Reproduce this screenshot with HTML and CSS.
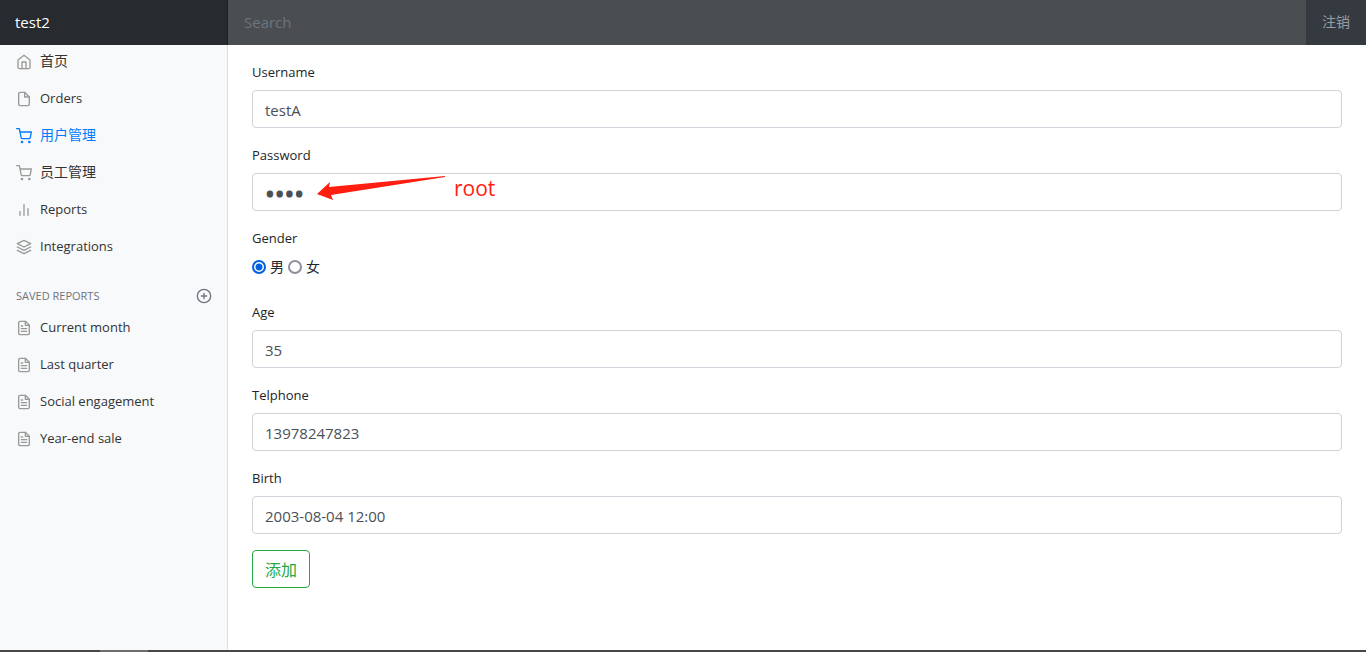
FILE: index.html
```
<!DOCTYPE html>
<html lang="zh-CN">
<head>
  <meta charset="UTF-8">
  <meta name="viewport" content="width=device-width, initial-scale=1.0">
  <title>用户管理</title>
  <link rel="stylesheet" href="styles.css">
</head>
<body>
  <svg class="sprite" aria-hidden="true">
    <symbol id="home" viewBox="0 0 24 24"><path d="M3 9l9-7 9 7v11a2 2 0 0 1-2 2H5a2 2 0 0 1-2-2z"/><path d="M9 22V12h6v10"/></symbol>
    <symbol id="file" viewBox="0 0 24 24"><path d="M13 2H6a2 2 0 0 0-2 2v16a2 2 0 0 0 2 2h12a2 2 0 0 0 2-2V9z"/><path d="M13 2v7h7"/></symbol>
    <symbol id="cart" viewBox="0 0 24 24"><circle cx="9" cy="21" r="1"/><circle cx="20" cy="21" r="1"/><path d="M1 1h4l2.68 13.39a2 2 0 0 0 2 1.61h9.72a2 2 0 0 0 2-1.61L23 6H6"/></symbol>
    <symbol id="bars" viewBox="0 0 24 24"><path d="M18 20V10M12 20V4M6 20v-6"/></symbol>
    <symbol id="layers" viewBox="0 0 24 24"><path d="M12 2L2 7l10 5 10-5-10-5z"/><path d="M2 17l10 5 10-5"/><path d="M2 12l10 5 10-5"/></symbol>
    <symbol id="text" viewBox="0 0 24 24"><path d="M14 2H6a2 2 0 0 0-2 2v16a2 2 0 0 0 2 2h12a2 2 0 0 0 2-2V8z"/><path d="M14 2v6h6M16 13H8M16 17H8M10 9H8"/></symbol>
    <symbol id="plus" viewBox="0 0 24 24"><circle cx="12" cy="12" r="10"/><path d="M12 8v8M8 12h8"/></symbol>
  </svg>

  <header class="navbar">
    <a class="brand" href="#">test2</a>
    <input class="search" type="text" placeholder="Search" aria-label="Search">
    <a class="logout" href="#">注销</a>
  </header>

  <div class="layout">
    <nav class="sidebar">
      <ul class="nav">
        <li><a class="nav-link zh" href="#"><svg class="icon"><use href="#home"/></svg><span>首页</span></a></li>
        <li><a class="nav-link" href="#"><svg class="icon"><use href="#file"/></svg><span>Orders</span></a></li>
        <li><a class="nav-link zh active" href="#"><svg class="icon"><use href="#cart"/></svg><span>用户管理</span></a></li>
        <li><a class="nav-link zh" href="#"><svg class="icon"><use href="#cart"/></svg><span>员工管理</span></a></li>
        <li><a class="nav-link" href="#"><svg class="icon"><use href="#bars"/></svg><span>Reports</span></a></li>
        <li><a class="nav-link" href="#"><svg class="icon"><use href="#layers"/></svg><span>Integrations</span></a></li>
      </ul>

      <h6 class="sidebar-heading">
        <span>Saved reports</span>
        <a href="#" aria-label="Add report"><svg class="icon"><use href="#plus"/></svg></a>
      </h6>

      <ul class="nav-saved">
        <li><a class="nav-link" href="#"><svg class="icon"><use href="#text"/></svg><span>Current month</span></a></li>
        <li><a class="nav-link" href="#"><svg class="icon"><use href="#text"/></svg><span>Last quarter</span></a></li>
        <li><a class="nav-link" href="#"><svg class="icon"><use href="#text"/></svg><span>Social engagement</span></a></li>
        <li><a class="nav-link" href="#"><svg class="icon"><use href="#text"/></svg><span>Year-end sale</span></a></li>
      </ul>
    </nav>

    <main class="content">
      <form>
        <div class="form-group">
          <label for="username">Username</label>
          <input class="form-control" id="username" type="text" value="testA">
        </div>
        <div class="form-group password">
          <label for="password">Password</label>
          <input class="form-control" id="password" type="password" value="root">
          <div class="note">
            <svg class="arrow" viewBox="0 0 130 26"><path d="M1 19L14 7l-1 5L129 1v1L15 20l2 5z"/></svg>
            <span>root</span>
          </div>
        </div>
        <div class="form-group" role="radiogroup" aria-labelledby="gender-label">
          <span class="label" id="gender-label">Gender</span>
          <div class="radios">
            <input type="radio" name="gender" id="male" checked>
            <label for="male">男</label>
            <input type="radio" name="gender" id="female">
            <label for="female">女</label>
          </div>
        </div>
        <div class="form-group">
          <label for="age">Age</label>
          <input class="form-control" id="age" type="text" value="35">
        </div>
        <div class="form-group">
          <label for="telphone">Telphone</label>
          <input class="form-control" id="telphone" type="text" value="13978247823">
        </div>
        <div class="form-group">
          <label for="birth">Birth</label>
          <input class="form-control" id="birth" type="text" value="2003-08-04 12:00">
        </div>
        <button class="btn" type="button">添加</button>
      </form>
    </main>
  </div>

  <footer class="taskbar"><span></span></footer>
</body>
</html>
```
FILE: styles.css
```
* {
  box-sizing: border-box;
}

body {
  margin: 0;
  min-height: 100vh;
  display: flex;
  flex-direction: column;
  font-family: "Open Sans", "Noto Sans CJK SC", sans-serif;
  font-size: 13px;
  line-height: 21px;
  color: #212529;
  background: #fff;
}

a {
  text-decoration: none;
}

ul {
  list-style: none;
  margin: 0;
  padding: 0;
}

.sprite {
  display: none;
}

.icon {
  width: 16px;
  height: 16px;
  flex: none;
  fill: none;
  stroke: currentColor;
  stroke-width: 2;
  stroke-linecap: round;
  stroke-linejoin: round;
}

/* top bar */
.navbar {
  display: flex;
  height: 45px;
  background: #343a40;
}

.brand {
  width: 228px;
  padding: 12px 15px;
  font-size: 15px;
  color: #fff;
  background: #272b30;
  box-shadow: inset -1px 0 0 rgba(0, 0, 0, .25);
}

.search {
  flex: 1;
  min-width: 0;
  padding: 0 16px;
  border: 0;
  outline: 0;
  font: inherit;
  font-size: 15px;
  color: #fff;
  background: #4a4e51;
}

.search::placeholder {
  color: #6c757d;
}

.logout {
  padding: 11px 16px;
  font-size: 14px;
  color: #9a9da0;
}

.layout {
  flex: 1;
  display: flex;
}

/* sidebar */
.sidebar {
  width: 228px;
  flex: none;
  background: #f8f9fa;
  border-right: 1px solid #dcdee0;
}

.nav {
  margin-top: -2px;
}

.nav-link {
  display: flex;
  align-items: center;
  gap: 8px;
  padding: 8px 16px;
  color: #333;
}

.nav-link .icon {
  color: #999;
}

.nav-link.zh {
  font-size: 14px;
}

.nav-link.zh span {
  line-height: 19px;
  padding-bottom: 2px;
}

.nav-link.active,
.nav-link.active .icon {
  color: #007bff;
}

.sidebar-heading {
  display: flex;
  justify-content: space-between;
  align-items: center;
  margin: 23px 0 5px;
  padding: 0 15px 0 16px;
  font-size: 11px;
  font-weight: 400;
  line-height: 16px;
  text-transform: uppercase;
  color: #6c757d;
}

.sidebar-heading a {
  display: flex;
  color: inherit;
}

/* form */
.content {
  flex: 1;
  min-width: 0;
  padding: 17px 24px;
}

.form-group {
  margin-bottom: 17px;
}

.form-group > label,
.label {
  display: block;
  margin-bottom: 7px;
}

.form-control {
  display: block;
  width: 100%;
  height: 38px;
  padding: 8px 12px 6px;
  border: 1px solid #ced4da;
  border-radius: 4px;
  font: inherit;
  font-size: 15px;
  color: #495057;
  background: #fff;
}

/* bigger, heavier dots */
.form-control[type="password"] {
  font-size: 26px;
  -webkit-text-stroke: 1px #495057;
}

.password {
  position: relative;
}

/* hint laid over the password box */
.note {
  position: absolute;
  left: 64px;
  bottom: 10px;
  display: flex;
  align-items: center;
  gap: 8px;
  font-size: 21px;
  line-height: 26px;
  color: #ff1e10;
  pointer-events: none;
}

.arrow {
  width: 130px;
  height: 26px;
  fill: currentColor;
}

.radios {
  display: flex;
  align-items: center;
  gap: 4px;
  height: 21px;
  margin-bottom: 25px;
  font-size: 14px;
}

.radios input {
  appearance: none;
  width: 14px;
  height: 14px;
  margin: 0;
  border: 2px solid #8f8f9d;
  border-radius: 50%;
  background: #fff;
}

.radios input:checked {
  border-color: #0060df;
  background: radial-gradient(circle, #0060df 3px, #fff 4px);
}

.btn {
  display: block;
  height: 38px;
  margin-top: -1px;
  padding: 7px 12px 5px;
  border: 1px solid #28a745;
  border-radius: 4px;
  font: inherit;
  font-size: 16px;
  line-height: 24px;
  color: #28a745;
  background: #fff;
}

.taskbar {
  height: 2px;
  background: #484648;
}

.taskbar span {
  display: block;
  width: 48px;
  height: 2px;
  margin-left: 100px;
  background: #6e6c6e;
}
```
